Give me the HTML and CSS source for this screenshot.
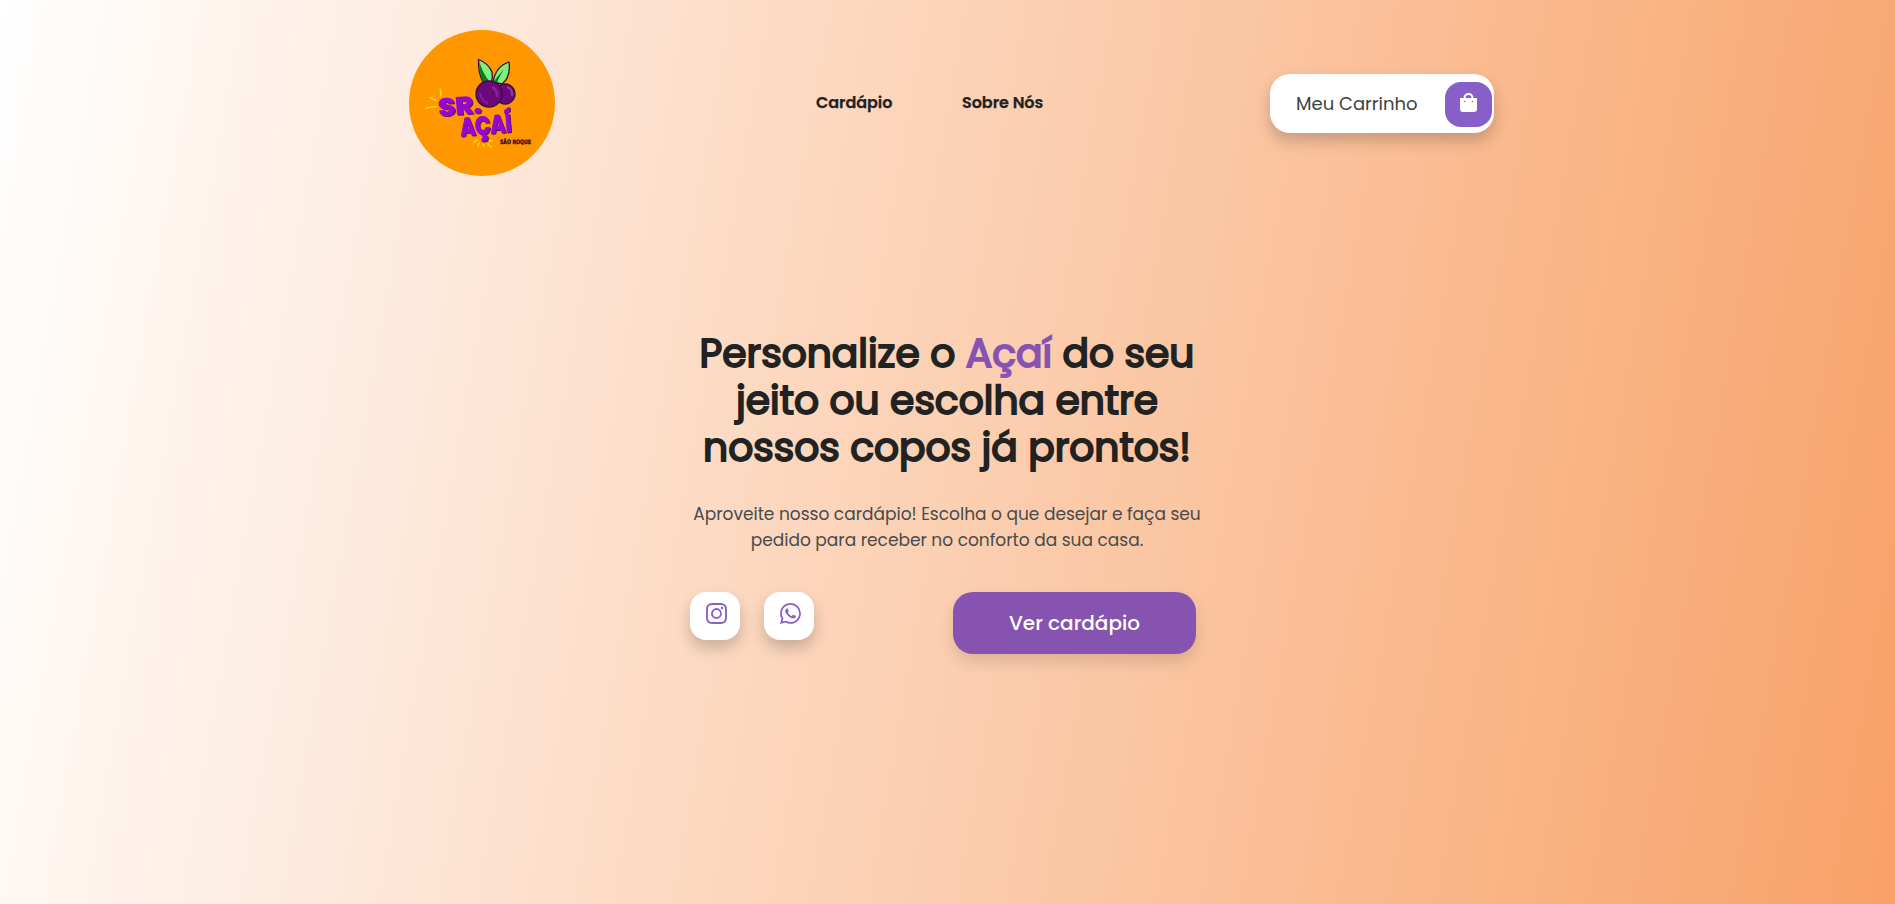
FILE: index.html
```html
<!DOCTYPE html>
<html lang="pt-BR">
<head>
<meta charset="utf-8">
<title>Sr. Açaí</title>
<link rel="stylesheet" href="styles.css">
</head>
<body>
<header class="header">
  <svg class="logo" viewBox="0 0 165 165" role="img" aria-label="Sr. Açaí São Roque">
    <circle cx="82" cy="83" r="73" fill="#ff9800"/>
    <g stroke="#3b0a3f" stroke-width="1.3" stroke-linejoin="round">
      <path d="M83 62Q78 53 78.500 39.500Q88 43 92 52Q93 57 91.500 62Z" fill="#7ef07b"/>
      <path d="M83 62Q79 53 79 41Q83 54 90 62Z" fill="#087c27" stroke="none"/>
      <path d="M93 62Q96 46 109 42Q111 57 102 64Z" fill="#7ef07b"/>
      <path d="M94 61Q98 56 104 49Q99 57 97 63Z" fill="#087c27" stroke="none"/>
      <circle cx="105" cy="74" r="10" fill="#6d087c"/>
      <path d="M107 67Q113 69 112 76" fill="none" stroke="#963ba1" stroke-width="2"/>
      <circle cx="89" cy="74" r="13" fill="#6d087c"/>
      <path d="M92 67Q98 70 97 77" fill="none" stroke="#842492" stroke-width="3"/>
      <path d="M80 73Q81 81 88 83" fill="none" stroke="#842492" stroke-width="2"/>
    </g>
    <g fill="none" stroke="#ffda08" stroke-width="1.600" stroke-linecap="round">
      <path d="M40.300 69.500L41 76M30 77.500L36 80.500M26 88L36 86.500M77 120L74 122M79 123L78 126M83 124L84 126M87 120L92 121M88 124L91 127"/>
    </g>
    <g class="logo-name">
      <text transform="translate(39 96) rotate(-5)" font-size="24" textLength="43" lengthAdjust="spacingAndGlyphs">SR.</text>
      <text transform="translate(61 116) rotate(-5)" font-size="25" textLength="51" lengthAdjust="spacingAndGlyphs">AÇAÍ</text>
    </g>
    <text class="logo-city" x="100" y="124" textLength="31" lengthAdjust="spacingAndGlyphs">SÃO ROQUE</text>
  </svg>
  <nav class="nav">
    <a class="nav-first">Cardápio</a>
    <a class="nav-second">Sobre Nós</a>
  </nav>
  <button class="cart">
    <span class="cart-label">Meu Carrinho</span>
    <span class="cart-icon">
      <svg width="17" height="19" viewBox="0 0 17 19"><path d="M4.500 6V5a4 4 0 0 1 8 0v1" fill="none" stroke="#fff" stroke-width="2"/><path d="M0 5h17V16a3 3 0 0 1-3 3H3a3 3 0 0 1-3-3z" fill="#fff"/><circle cx="4.500" cy="8.500" r=".8" fill="#885fc8"/><circle cx="12.500" cy="8.500" r=".8" fill="#885fc8"/></svg>
    </span>
  </button>
</header>
<main class="hero">
  <h1 class="title">Personalize o <span class="accent">Açaí</span> do seu<br>jeito ou escolha entre<br>nossos copos já prontos!</h1>
  <p class="lead">Aproveite nosso cardápio! Escolha o que desejar e faça seu<br>pedido para receber no conforto da sua casa.</p>
  <div class="actions">
    <a class="social"><svg width="21" height="21" viewBox="0 0 16 16" fill="#885fc8"><path d="M8 0C5.829 0 5.556.01 4.703.048 3.850.088 3.269.222 2.760.420a3.900 3.900 0 0 0-1.417.923A3.900 3.900 0 0 0 .420 2.760C.222 3.268.087 3.850.048 4.700.010 5.555 0 5.827 0 8.001c0 2.172.010 2.444.048 3.297.040.852.174 1.433.372 1.942.205.526.478.972.923 1.417.444.445.890.719 1.416.923.510.198 1.090.333 1.942.372C5.555 15.990 5.827 16 8 16s2.444-.010 3.298-.048c.851-.040 1.434-.174 1.943-.372a3.900 3.900 0 0 0 1.416-.923c.445-.445.718-.891.923-1.417.197-.509.332-1.090.372-1.942C15.990 10.445 16 10.173 16 8s-.010-2.445-.048-3.299c-.040-.851-.175-1.433-.372-1.941a3.900 3.900 0 0 0-.923-1.417A3.900 3.900 0 0 0 13.240.420c-.510-.198-1.092-.333-1.943-.372C10.443.010 10.172 0 7.998 0zm0 1.442c2.136 0 2.389.007 3.232.046.780.035 1.204.166 1.486.275.373.145.640.319.920.599s.453.546.598.920c.110.281.240.705.275 1.485.039.843.047 1.096.047 3.231s-.008 2.389-.047 3.232c-.035.780-.166 1.203-.275 1.485a2.500 2.500 0 0 1-.599.919c-.280.280-.546.453-.920.598-.280.110-.704.240-1.485.276-.843.038-1.096.047-3.232.047s-2.390-.009-3.233-.047c-.780-.036-1.203-.166-1.485-.276a2.500 2.500 0 0 1-.920-.598 2.500 2.500 0 0 1-.600-.920c-.109-.281-.240-.705-.275-1.485-.038-.843-.046-1.096-.046-3.233s.008-2.388.046-3.231c.036-.780.166-1.204.276-1.486.145-.373.319-.640.599-.920s.546-.453.920-.598c.282-.110.705-.240 1.485-.276.738-.034 1.024-.044 2.515-.045zm4.270 1.328a.960.960 0 1 0 0 1.920.960.960 0 0 0 0-1.920m-4.270 1.122a4.109 4.109 0 1 0 0 8.217 4.109 4.109 0 0 0 0-8.217m0 1.441a2.667 2.667 0 1 1 0 5.334 2.667 2.667 0 0 1 0-5.334"/></svg></a>
    <a class="social"><svg width="21" height="21" viewBox="0 0 16 16" fill="#885fc8"><path d="M13.601 2.326A7.850 7.850 0 0 0 7.994 0C3.627 0 .068 3.558.064 7.926c0 1.399.366 2.760 1.057 3.965L0 16l4.204-1.102a7.900 7.900 0 0 0 3.790.965h.004c4.368 0 7.926-3.558 7.930-7.930A7.900 7.900 0 0 0 13.600 2.326zM7.994 14.521a6.600 6.600 0 0 1-3.356-.920l-.240-.144-2.494.654.666-2.433-.156-.251a6.560 6.560 0 0 1-1.007-3.505c0-3.626 2.957-6.584 6.591-6.584a6.560 6.560 0 0 1 4.660 1.931 6.560 6.560 0 0 1 1.928 4.660c-.004 3.639-2.961 6.592-6.592 6.592m3.615-4.934c-.197-.099-1.170-.578-1.353-.646-.182-.065-.315-.099-.445.099-.133.197-.513.646-.627.775-.114.133-.232.148-.430.050-.197-.100-.836-.308-1.592-.985-.590-.525-.985-1.175-1.103-1.372-.114-.198-.011-.304.088-.403.087-.088.197-.232.296-.346.100-.114.133-.198.198-.330.065-.134.034-.248-.015-.347-.050-.099-.445-1.076-.612-1.470-.160-.389-.323-.335-.445-.340-.114-.007-.247-.007-.380-.007a.730.730 0 0 0-.529.247c-.182.198-.691.677-.691 1.654s.710 1.916.810 2.049c.098.133 1.394 2.132 3.383 2.992.470.205.840.326 1.129.418.475.152.904.129 1.246.080.380-.058 1.171-.480 1.338-.943.164-.464.164-.860.114-.943-.049-.084-.182-.133-.380-.232"/></svg></a>
    <a class="menu-btn">Ver cardápio</a>
  </div>
</main>
</body>
</html>
```
FILE: styles.css
```css
* { box-sizing: border-box; }
body {
  margin: 0;
  min-height: 904px;
  overflow: hidden;
  font-family: Poppins, Inter, sans-serif;
  color: #212322;
  background: linear-gradient(100deg, #fff 0%, #f8a167 100%);
}
.header { display: flex; align-items: center; height: 165px; margin: 20px 401px 0 400px; }
.logo { width: 165px; height: 165px; flex: none; }
.logo-name { font-family: Poppins, sans-serif; font-weight: 700; fill: #9707d3; stroke: #9707d3; stroke-width: 1px; stroke-linejoin: round; filter: drop-shadow(1px 1px 0 #560c70); }
.logo-city { font: 700 6px "DejaVu Sans", sans-serif; fill: #3b0a20; stroke: #3b0a20; stroke-width: .4px; }
.nav { display: flex; margin-left: 251px; font-size: 16px; font-weight: 600; letter-spacing: -.05px; -webkit-text-stroke: .25px currentColor; white-space: nowrap; }
.nav-first { width: 146px; }
.nav-second { width: 308px; }
.cart { display: flex; flex: none; align-items: center; justify-content: space-between; width: 224px; height: 59px; margin-top: 1px; padding: 2px 2px 0 26px; border: 0; border-radius: 20px; background: #fff; color: #404040; font: 400 18px Poppins, Inter, sans-serif; box-shadow: 0 8px 15px rgba(0, 0, 0, .2); white-space: nowrap; }
.cart-label { margin-top: -2px; }
.cart-icon { display: flex; align-items: center; justify-content: center; width: 47px; height: 45px; padding-bottom: 4px; border-radius: 16px; background: #885fc8; }
.hero { display: flex; flex-direction: column; width: 520px; margin: 145px auto 0 687px; }
.title { width: 520px; margin: 0; font-size: 39.2px; font-weight: 400; -webkit-text-stroke: 1.9px currentColor; line-height: 47px; text-align: center; white-space: nowrap; }
.accent { color: #8653b3; }
.lead { margin: 30px 0 0; color: #484b4c; font-size: 17px; line-height: 26px; text-align: center; white-space: nowrap; }
.actions { display: flex; align-items: flex-start; margin: 39px 0 0 3px; }
.social { display: flex; justify-content: center; width: 50px; height: 48px; margin-right: 24px; padding: 11px 0 0 2px; border-radius: 16px; background: #fff; box-shadow: 0 8px 15px rgba(0, 0, 0, .2); }
.menu-btn { display: flex; align-items: center; justify-content: center; width: 243px; height: 62px; margin-left: 115px; border-radius: 20px; background: #8653b0; color: #fff; font-size: 20px; font-weight: 500; white-space: nowrap; box-shadow: 0 8px 15px rgba(0, 0, 0, .12); }
```
